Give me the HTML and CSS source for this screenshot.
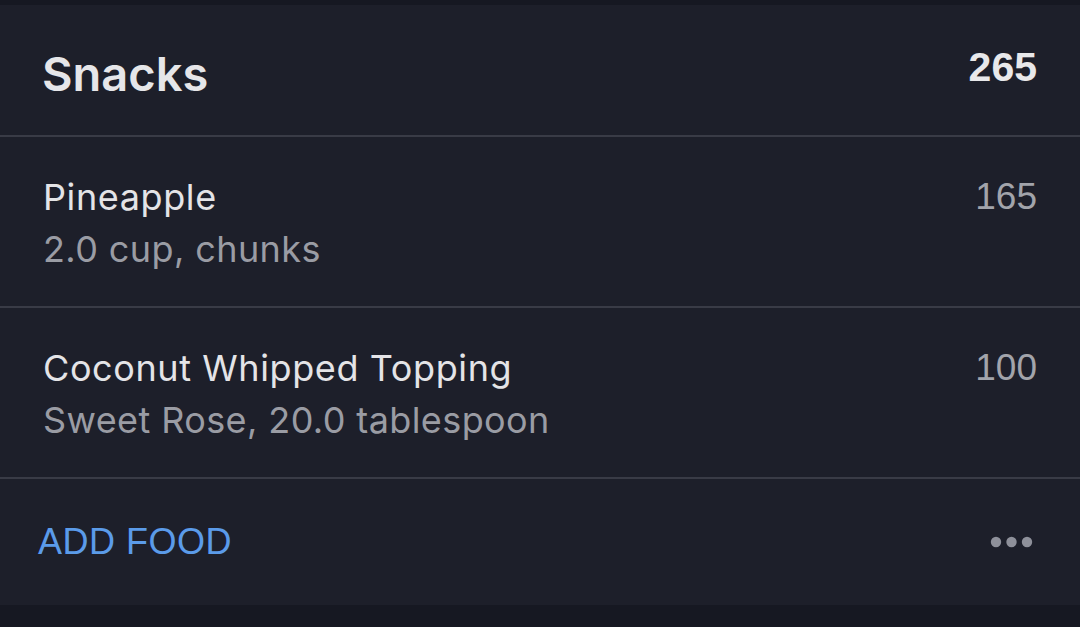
FILE: index.html
```html
<!DOCTYPE html>
<html>
<head>
<meta charset="utf-8">
<link rel="stylesheet" href="styles.css">
</head>
<body>
<section class="meal">
  <header class="meal-head">
    <h2 class="meal-title">Snacks</h2>
    <span class="meal-total">265</span>
  </header>
  <div class="food">
    <div class="food-info">
      <div class="food-name">Pineapple</div>
      <div class="food-desc">2.0 cup, chunks</div>
    </div>
    <span class="food-cal">165</span>
  </div>
  <div class="food">
    <div class="food-info">
      <div class="food-name">Coconut Whipped Topping</div>
      <div class="food-desc">Sweet Rose, 20.0 tablespoon</div>
    </div>
    <span class="food-cal">100</span>
  </div>
  <footer class="meal-foot">
    <span class="add-food">ADD FOOD</span>
    <svg class="more" width="44" height="12" viewBox="0 0 44 12">
      <circle cx="6" cy="6" r="5.2" fill="#8e909a"/>
      <circle cx="21.5" cy="6" r="5.2" fill="#8e909a"/>
      <circle cx="37" cy="6" r="5.2" fill="#8e909a"/>
    </svg>
  </footer>
</section>
</body>
</html>
```
FILE: styles.css
```css
html, body {
  margin: 0;
  padding: 0;
  background: #161822;
  width: 1080px;
  height: 627px;
  overflow: hidden;
}
body {
  padding-top: 5px;
  box-sizing: border-box;
}
.meal {
  background: #1d1f2a;
}
.meal-head {
  display: flex;
  justify-content: space-between;
  align-items: flex-start;
  padding: 39.5px 43px 32.5px 42px;
  border-bottom: 2px solid #393b46;
}
.meal-title {
  margin: 0;
  font-family: Inter, "Liberation Sans", sans-serif;
  font-weight: 600;
  font-size: 47px;
  line-height: 58px;
  color: #e6e6e9;
}
.meal-total {
  font-family: "Liberation Sans", Arial, sans-serif;
  font-weight: 700;
  font-size: 41px;
  line-height: 44px;
  color: #e8e8ea;
}
.food {
  display: flex;
  justify-content: space-between;
  align-items: flex-start;
  padding: 34px 43px 31px 43px;
  border-bottom: 2px solid #393b46;
}
.food-name, .food-desc {
  font-family: Inter, "Liberation Sans", sans-serif;
  font-size: 36px;
  line-height: 52px;
}
.food-name {
  letter-spacing: 0.6px;
  color: #e4e4e7;
}
.food-desc {
  letter-spacing: 0.4px;
  color: #9a9ca4;
}
.food-cal {
  font-family: "Liberation Sans", Arial, sans-serif;
  font-size: 37px;
  line-height: 52px;
  color: #a2a4ab;
}
.meal-foot {
  height: 126px;
  display: flex;
  justify-content: space-between;
  align-items: center;
  padding: 0 46px 0 38px;
}
.add-food {
  font-family: "Liberation Sans", Arial, sans-serif;
  font-size: 36px;
  line-height: 40px;
  letter-spacing: 0.5px;
  color: #5b9be9;
}
.more {
  display: block;
}
```
